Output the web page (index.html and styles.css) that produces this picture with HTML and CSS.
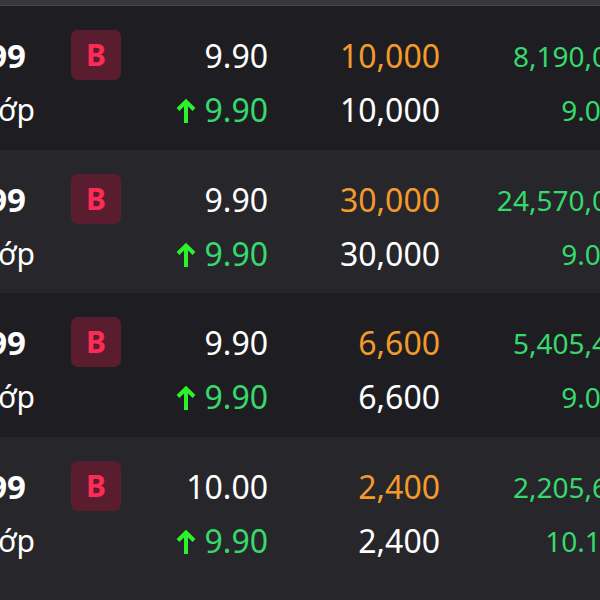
FILE: index.html
```html
<!DOCTYPE html>
<html lang="vi">
<head>
<meta charset="utf-8">
<title>Khớp lệnh</title>
<link rel="stylesheet" href="styles.css">
</head>
<body>
<div class="topbar"></div>
<div class="list">
  <div class="row dark">
    <div class="col code"><span class="sym">CVNM2299</span><span class="status">Khớp</span></div>
    <div class="col side"><span class="badge">B</span></div>
    <div class="col price"><span class="l1">9.90</span><span class="l2 up"><svg class="arrow" viewBox="0 0 20 26"><path d="M10 25V3.5M2 11.5L10 3.5L18 11.5"/></svg>9.90</span></div>
    <div class="col vol"><span class="l1 orange">10,000</span><span class="l2">10,000</span></div>
    <div class="col val"><span class="l1 green">8,190,000</span><span class="l2 green">9.09%</span></div>
  </div>
  <div class="row light">
    <div class="col code"><span class="sym">CVNM2299</span><span class="status">Khớp</span></div>
    <div class="col side"><span class="badge">B</span></div>
    <div class="col price"><span class="l1">9.90</span><span class="l2 up"><svg class="arrow" viewBox="0 0 20 26"><path d="M10 25V3.5M2 11.5L10 3.5L18 11.5"/></svg>9.90</span></div>
    <div class="col vol"><span class="l1 orange">30,000</span><span class="l2">30,000</span></div>
    <div class="col val"><span class="l1 green">24,570,000</span><span class="l2 green">9.09%</span></div>
  </div>
  <div class="row dark">
    <div class="col code"><span class="sym">CVNM2299</span><span class="status">Khớp</span></div>
    <div class="col side"><span class="badge">B</span></div>
    <div class="col price"><span class="l1">9.90</span><span class="l2 up"><svg class="arrow" viewBox="0 0 20 26"><path d="M10 25V3.5M2 11.5L10 3.5L18 11.5"/></svg>9.90</span></div>
    <div class="col vol"><span class="l1 orange">6,600</span><span class="l2">6,600</span></div>
    <div class="col val"><span class="l1 green">5,405,400</span><span class="l2 green">9.09%</span></div>
  </div>
  <div class="row light">
    <div class="col code"><span class="sym">CVNM2299</span><span class="status">Khớp</span></div>
    <div class="col side"><span class="badge">B</span></div>
    <div class="col price"><span class="l1">10.00</span><span class="l2 up"><svg class="arrow" viewBox="0 0 20 26"><path d="M10 25V3.5M2 11.5L10 3.5L18 11.5"/></svg>9.90</span></div>
    <div class="col vol"><span class="l1 orange">2,400</span><span class="l2">2,400</span></div>
    <div class="col val"><span class="l1 green">2,205,600</span><span class="l2 green">10.10%</span></div>
  </div>
</div>
</body>
</html>
```
FILE: styles.css
```css
html, body {
  margin: 0;
  padding: 0;
  background: #26262b;
  overflow: hidden;
  width: 600px;
  height: 600px;
}
body {
  font-family: "Noto Sans", "Open Sans", sans-serif;
  color: #ffffff;
}
.topbar {
  height: 5px;
  background: #38373d;
  border-bottom: 1px solid #46454c;
}
.list {
  display: flex;
  flex-direction: column;
}
.row {
  display: grid;
  grid-template-columns: 71px 50px 147px 172px 200px;
  height: 143.5px;
  box-sizing: border-box;
  padding-top: 23px;
  width: 640px;
}
.row.dark { background: #1e1e22; }
.row.light { background: #26262b; }
.col {
  display: flex;
  flex-direction: column;
  font-size: 32px;
  line-height: 54px;
  white-space: nowrap;
}
.code {
  align-items: flex-end;
  padding-right: 36px;
  box-sizing: border-box;
}
.code .sym {
  font-weight: 700;
  font-size: 33px;
  margin-right: 9px;
}
.code .status {
  font-size: 30px;
}
.side {
  align-items: flex-start;
}
.badge {
  margin-top: 1px;
  width: 50px;
  height: 50px;
  border-radius: 7px;
  background: #5a1d2f;
  color: #ff2b57;
  font-weight: 700;
  font-size: 30px;
  line-height: 50px;
  text-align: center;
}
.price, .vol, .val {
  align-items: flex-end;
}
.val {
  font-size: 28px;
}
.up {
  color: #36d96c;
  display: flex;
  align-items: center;
}
.arrow {
  width: 20px;
  height: 26px;
  margin-right: 9px;
  margin-top: 2px;
  fill: none;
  stroke: #2cf22c;
  stroke-width: 4;
  stroke-linecap: butt;
}
.orange { color: #f39a2c; }
.green { color: #36d96c; }
```
